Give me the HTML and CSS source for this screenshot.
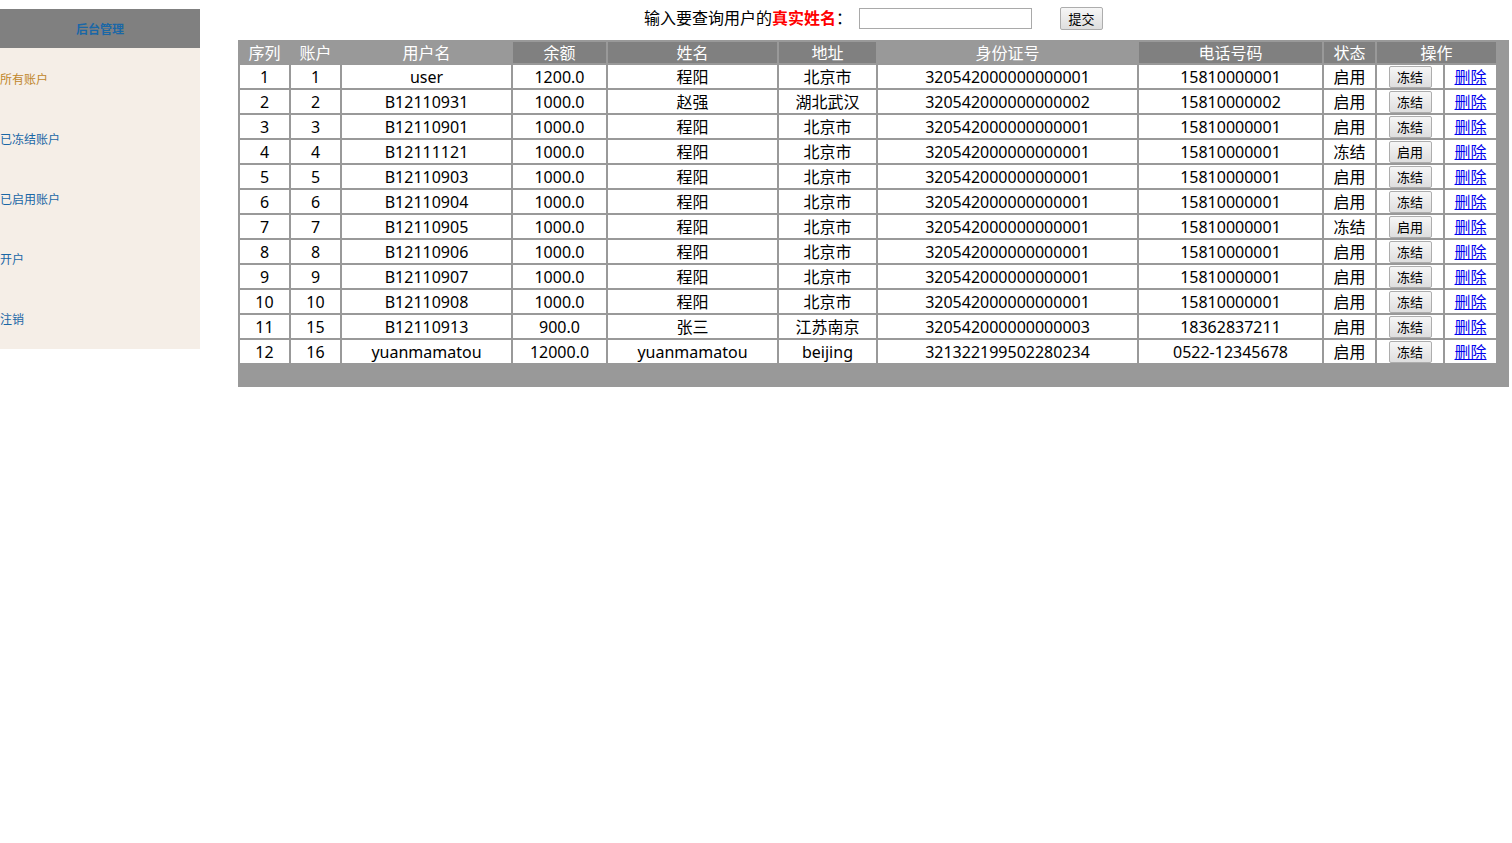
FILE: index.html
```html
<!DOCTYPE html>
<html lang="zh-CN">
<head>
    <meta charset="UTF-8">
    <title>后台管理 - 所有账户</title>
    <link rel="stylesheet" href="styles.css">
</head>
<body>
    <div class="sidebar">
        <div class="sidebar-title">后台管理</div>
        <div class="menu">
            <a href="#" class="active">所有账户</a>
            <a href="#">已冻结账户</a>
            <a href="#">已启用账户</a>
            <a href="#">开户</a>
            <a href="#">注销</a>
        </div>
    </div>
    <div class="main">
        <form class="search" action="#" method="post">
            <label for="real-name">输入要查询用户的<b class="hl">真实姓名</b>：</label>
            <input type="text" id="real-name" name="realname">
            <button type="submit" class="btn">提交</button>
        </form>
        <div class="table-wrap">
            <table>
                <colgroup>
                    <col style="width:49px"><col style="width:49px"><col style="width:169px"><col style="width:93px">
                    <col style="width:169px"><col style="width:97px"><col style="width:259px"><col style="width:183px">
                    <col style="width:51px"><col style="width:66px"><col style="width:51px">
                </colgroup>
                <thead>
                    <tr>
                        <th>序列</th>
                        <th>账户</th>
                        <th>用户名</th>
                        <th class="dark">余额</th>
                        <th class="dark">姓名</th>
                        <th class="dark">地址</th>
                        <th>身份证号</th>
                        <th class="dark">电话号码</th>
                        <th class="dark">状态</th>
                        <th class="dark" colspan="2">操作</th>
                    </tr>
                </thead>
                <tbody>
                    <tr><td>1</td><td>1</td><td>user</td><td>1200.0</td><td>程阳</td><td>北京市</td><td>320542000000000001</td><td>15810000001</td><td>启用</td><td><button class="btn">冻结</button></td><td><a href="#">删除</a></td></tr>
                    <tr><td>2</td><td>2</td><td>B12110931</td><td>1000.0</td><td>赵强</td><td>湖北武汉</td><td>320542000000000002</td><td>15810000002</td><td>启用</td><td><button class="btn">冻结</button></td><td><a href="#">删除</a></td></tr>
                    <tr><td>3</td><td>3</td><td>B12110901</td><td>1000.0</td><td>程阳</td><td>北京市</td><td>320542000000000001</td><td>15810000001</td><td>启用</td><td><button class="btn">冻结</button></td><td><a href="#">删除</a></td></tr>
                    <tr><td>4</td><td>4</td><td>B12111121</td><td>1000.0</td><td>程阳</td><td>北京市</td><td>320542000000000001</td><td>15810000001</td><td>冻结</td><td><button class="btn">启用</button></td><td><a href="#">删除</a></td></tr>
                    <tr><td>5</td><td>5</td><td>B12110903</td><td>1000.0</td><td>程阳</td><td>北京市</td><td>320542000000000001</td><td>15810000001</td><td>启用</td><td><button class="btn">冻结</button></td><td><a href="#">删除</a></td></tr>
                    <tr><td>6</td><td>6</td><td>B12110904</td><td>1000.0</td><td>程阳</td><td>北京市</td><td>320542000000000001</td><td>15810000001</td><td>启用</td><td><button class="btn">冻结</button></td><td><a href="#">删除</a></td></tr>
                    <tr><td>7</td><td>7</td><td>B12110905</td><td>1000.0</td><td>程阳</td><td>北京市</td><td>320542000000000001</td><td>15810000001</td><td>冻结</td><td><button class="btn">启用</button></td><td><a href="#">删除</a></td></tr>
                    <tr><td>8</td><td>8</td><td>B12110906</td><td>1000.0</td><td>程阳</td><td>北京市</td><td>320542000000000001</td><td>15810000001</td><td>启用</td><td><button class="btn">冻结</button></td><td><a href="#">删除</a></td></tr>
                    <tr><td>9</td><td>9</td><td>B12110907</td><td>1000.0</td><td>程阳</td><td>北京市</td><td>320542000000000001</td><td>15810000001</td><td>启用</td><td><button class="btn">冻结</button></td><td><a href="#">删除</a></td></tr>
                    <tr><td>10</td><td>10</td><td>B12110908</td><td>1000.0</td><td>程阳</td><td>北京市</td><td>320542000000000001</td><td>15810000001</td><td>启用</td><td><button class="btn">冻结</button></td><td><a href="#">删除</a></td></tr>
                    <tr><td>11</td><td>15</td><td>B12110913</td><td>900.0</td><td>张三</td><td>江苏南京</td><td>320542000000000003</td><td>18362837211</td><td>启用</td><td><button class="btn">冻结</button></td><td><a href="#">删除</a></td></tr>
                    <tr><td>12</td><td>16</td><td>yuanmamatou</td><td>12000.0</td><td>yuanmamatou</td><td>beijing</td><td>321322199502280234</td><td>0522-12345678</td><td>启用</td><td><button class="btn">冻结</button></td><td><a href="#">删除</a></td></tr>
                </tbody>
            </table>
        </div>
    </div>
</body>
</html>
```

FILE: styles.css
```css
body {
    margin: 0;
    font-family: "Noto Sans", "Noto Sans CJK SC", sans-serif;
    font-size: 16px;
    color: #000;
    display: flex;
    align-items: flex-start;
}
.sidebar {
    width: 200px;
    flex: none;
    margin-top: 9px;
}
.sidebar-title {
    height: 39px;
    line-height: 41px;
    background-color: #808080;
    color: #1a67a6;
    font-size: 12px;
    font-weight: bold;
    text-align: center;
}
.menu {
    background-color: #f5eee7;
    padding-top: 2px;
}
.menu a {
    display: block;
    height: 60px;
    line-height: 60px;
    font-size: 12px;
    color: #1a67a6;
    text-decoration: none;
}
.menu a:last-child {
    height: 59px;
}
.menu a.active {
    color: #c0862a;
}
.main {
    margin-left: 38px;
    width: 1271px;
}
.search {
    display: flex;
    align-items: center;
    justify-content: center;
    height: 23px;
    margin: 7px 0 10px;
    font-size: 16px;
}
.search label {
    margin-top: -3px;
}
.search .hl {
    color: #ff0000;
}
.search input {
    width: 171px;
    height: 19px;
    margin: 0 28px 0 7px;
    padding: 0;
    border: 1px solid #a9a9a9;
    box-sizing: content-box;
}
.btn {
    width: 43px;
    height: 23px;
    padding: 0;
    border: 1px solid #adadad;
    border-radius: 2px;
    background: linear-gradient(#f6f6f6, #dedede);
    font-family: "Noto Sans CJK SC", sans-serif;
    font-size: 13px;
    line-height: 18px;
    color: #000;
}
.table-wrap {
    background-color: #999999;
    padding: 0 11px 22px 0;
}
table {
    table-layout: fixed;
    width: 1260px;
    border-spacing: 2px;
    text-align: center;
}
th {
    height: 20px;
    padding: 1px 0 0;
    font-weight: normal;
    color: #fff;
    line-height: 20px;
}
th.dark {
    background-color: #808080;
}
td {
    height: 22px;
    padding: 1px 0 0;
    background-color: #fff;
    line-height: 22px;
    white-space: nowrap;
}
td .btn {
    display: block;
    height: 22px;
    margin: 0 auto;
}
td a {
    color: #0000ee;
}
```
